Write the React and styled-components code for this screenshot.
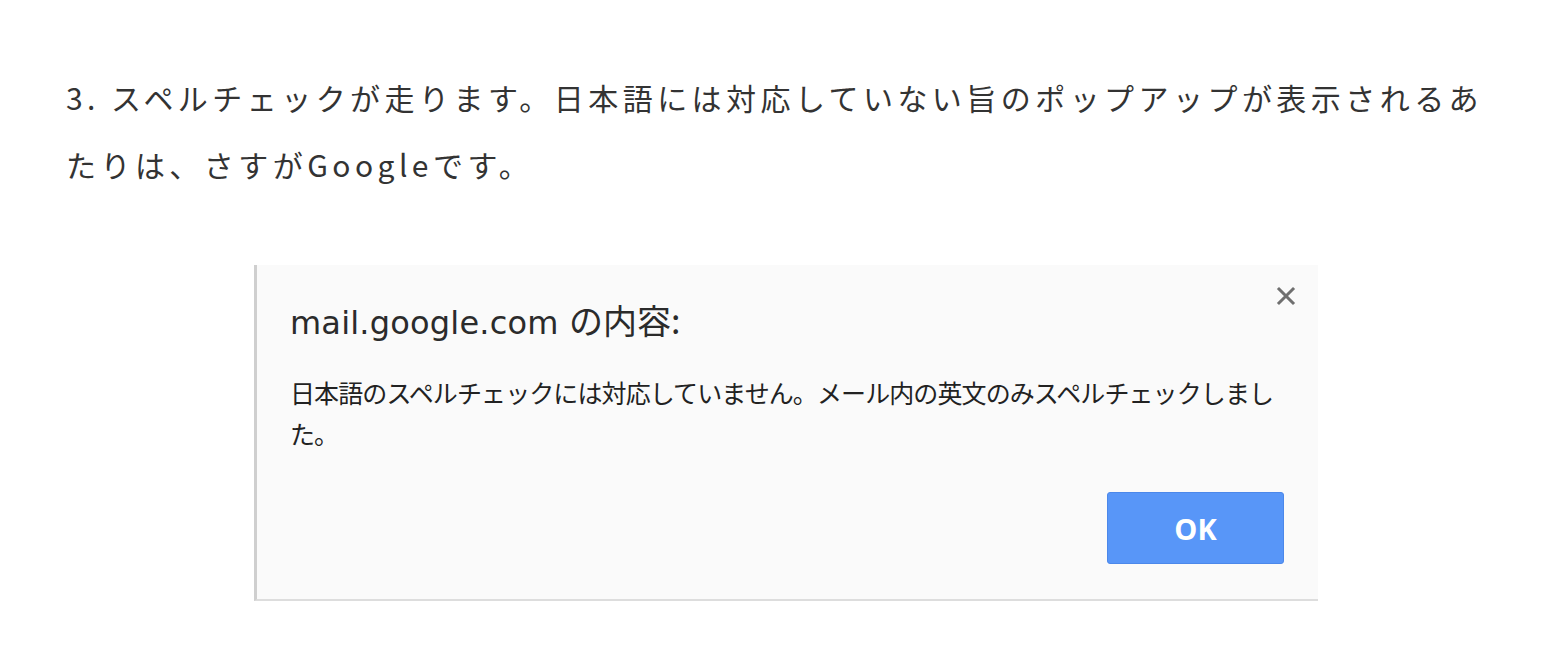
import React from "react";
import styled, { createGlobalStyle } from "styled-components";

const GlobalStyle = createGlobalStyle`
  body {
    margin: 0;
    background: #ffffff;
  }
`;

function App() {
  return (
    <>
      <GlobalStyle />
      <Page>
        <Paragraph>
          3. スペルチェックが走ります。日本語には対応していない旨のポップアップが表示されるあたりは、さすがGoogleです。
        </Paragraph>
        <Dialog>
          <DialogHeader>
            <DialogTitle>
              mail.google.com <TitleSuffix>の内容:</TitleSuffix>
            </DialogTitle>
            <CloseButton aria-label="閉じる">
              <svg width="22" height="22" viewBox="0 0 22 22">
                <path d="M4 4 L18 18 M18 4 L4 18" stroke="#6f6f6f" strokeWidth="3" strokeLinecap="square" />
              </svg>
            </CloseButton>
          </DialogHeader>
          <DialogMessage>
            日本語のスペルチェックには対応していません。メール内の英文のみスペルチェックしました。
          </DialogMessage>
          <OkButton>OK</OkButton>
        </Dialog>
      </Page>
    </>
  );
}

export default App;

const Page = styled.main`
  width: 1550px;
  height: 668px;
  box-sizing: border-box;
  padding: 64px 66px 0;
  overflow: hidden;
`;

const Paragraph = styled.p`
  margin: 0;
  width: 1418px;
  font-family: "Noto Sans CJK JP", sans-serif;
  font-size: 30px;
  line-height: 67px;
  letter-spacing: 4.45px;
  color: #333333;
`;

const Dialog = styled.figure`
  margin: 67px 0 0 188px;
  width: 1064px;
  height: 336px;
  box-sizing: border-box;
  padding: 20px 22px 0 33px;
  display: flex;
  flex-direction: column;
  background: #fafafa;
  border-left: 3px solid #cfcfcf;
  border-bottom: 2px solid #dddddd;
`;

const DialogHeader = styled.div`
  display: flex;
  justify-content: space-between;
  align-items: flex-start;
`;

const DialogTitle = styled.h2`
  margin: 18px 0 0;
  height: 40px;
  font-family: "DejaVu Sans", "Noto Sans CJK JP", sans-serif;
  font-weight: normal;
  font-size: 32px;
  line-height: 40px;
  letter-spacing: 0.2px;
  color: #2b2b2b;
`;

const TitleSuffix = styled.span`
  font-family: "Noto Sans CJK JP", sans-serif;
  font-size: 34px;
  line-height: 1;
  letter-spacing: 0;
`;

const CloseButton = styled.button`
  display: flex;
  padding: 0;
  margin: 0 -1px 0 0;
  border: none;
  background: transparent;
  cursor: pointer;
`;

const DialogMessage = styled.p`
  margin: 29px 12px 0 0;
  font-family: "Noto Sans CJK JP", sans-serif;
  font-size: 25px;
  line-height: 41px;
  letter-spacing: -0.9px;
  color: #222222;
`;

const OkButton = styled.button`
  align-self: flex-end;
  margin: 38px 12px 0 0;
  width: 177px;
  height: 72px;
  border: 1px solid #4c88ea;
  border-radius: 3px;
  background: #5896f8;
  color: #ffffff;
  font-family: "Open Sans", sans-serif;
  font-weight: bold;
  font-size: 29px;
  cursor: pointer;
`;
